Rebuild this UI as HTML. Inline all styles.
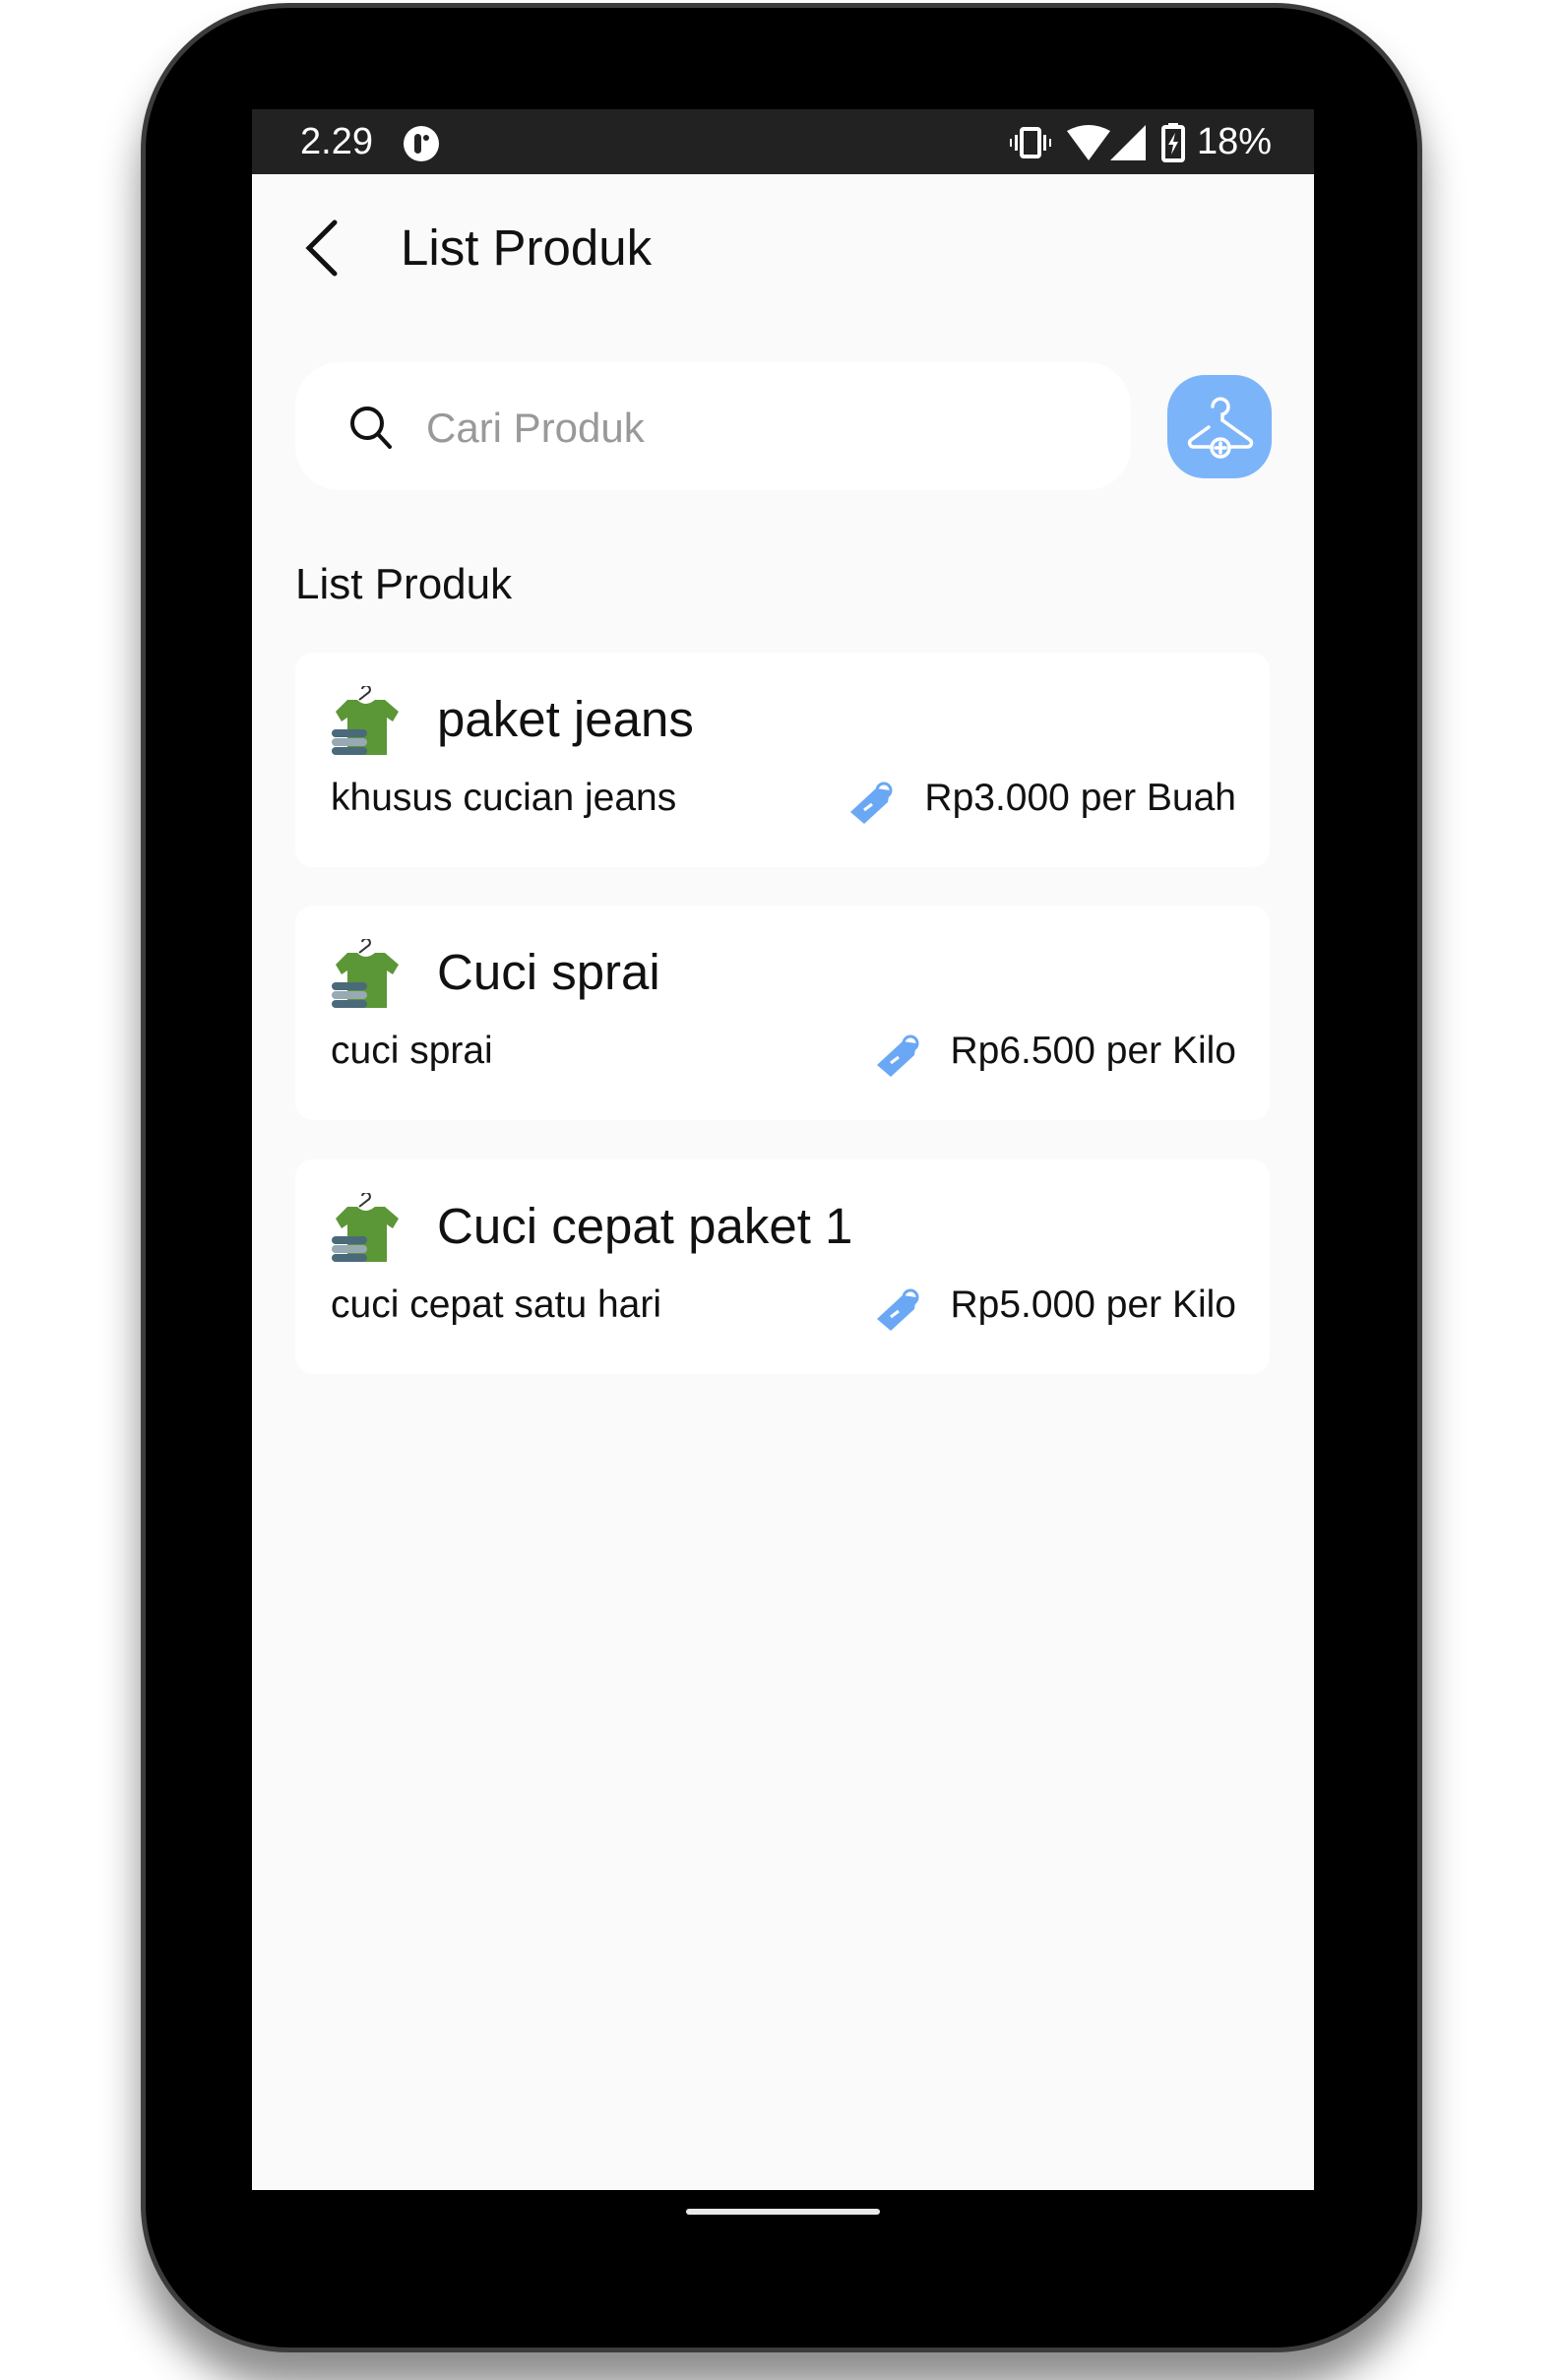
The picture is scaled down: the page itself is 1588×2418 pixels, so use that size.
<!DOCTYPE html>
<html><head><meta charset="utf-8"><style>
*{margin:0;padding:0;box-sizing:border-box}
body{width:1588px;height:2418px;background:#fff;position:relative;overflow:hidden;font-family:"Liberation Sans",sans-serif}
.phone{position:absolute;left:143px;top:3px;width:1302px;height:2387px;background:#000;border:5px solid #3c3c3c;border-radius:150px;box-shadow:0 35px 40px rgba(0,0,0,.45)}
.screen{position:absolute;left:256px;top:111px;width:1079px;height:2114px;background:#fafafa}
.status{position:absolute;left:0;top:0;width:100%;height:66px;background:#222;color:#fff}
.abs{position:absolute}
.card{position:absolute;left:44px;width:990px;height:218px;background:#fff;border-radius:18px}
.title{position:absolute;left:144px;top:38px;font-size:51px;color:#111}
.desc{position:absolute;left:36px;top:126px;font-size:39px;color:#111}
.price{position:absolute;right:34px;top:126px;font-size:39px;color:#111}
.shirt{position:absolute;left:35px;top:34px;width:72px;height:72px}
.tag{position:absolute;top:130px;width:48px;height:44px}
</style></head><body>
<div class="phone"></div>
<div class="screen">
 <div class="status">
  <div class="abs" style="left:49px;top:12px;font-size:38px">2.29</div>
  <svg class="abs" style="left:153px;top:16px" width="38" height="38" viewBox="0 0 38 38"><circle cx="19" cy="19" r="18" fill="#fff"/><rect x="12" y="9" width="7" height="20" rx="3.5" fill="#222"/><circle cx="24" cy="13" r="3" fill="#222"/></svg>
  <svg class="abs" style="left:770px;top:18px" width="44" height="32" viewBox="0 0 44 32"><rect x="12" y="2" width="18" height="28" rx="2" fill="none" stroke="#fff" stroke-width="4"/><rect x="5" y="8" width="3" height="16" fill="#fff"/><rect x="34" y="8" width="3" height="16" fill="#fff"/><rect x="0" y="12" width="2" height="8" fill="#fff"/><rect x="40" y="12" width="2" height="8" fill="#fff"/></svg>
  <svg class="abs" style="left:828px;top:16px" width="44" height="36" viewBox="0 0 44 36"><path d="M0 6Q22-6 44 6L22 36Z" fill="#fff"/></svg>
  <svg class="abs" style="left:872px;top:16px" width="36" height="36" viewBox="0 0 36 36"><path d="M36 0V36H0Z" fill="#fff"/></svg>
  <svg class="abs" style="left:924px;top:14px" width="24" height="40" viewBox="0 0 24 40"><rect x="2" y="4" width="20" height="34" rx="2" fill="none" stroke="#fff" stroke-width="4"/><rect x="7" y="0" width="10" height="4" fill="#fff"/><path d="M14 10L7 22H12L10 32L17 19H12Z" fill="#fff"/></svg>
  <div class="abs" style="left:960px;top:12px;font-size:38px">18%</div>
 </div>
 <svg class="abs" style="left:50px;top:112px" width="40" height="58" viewBox="0 0 40 58"><path d="M34 3L8 29L34 55" fill="none" stroke="#111" stroke-width="5" stroke-linecap="round"/></svg>
 <div class="abs" style="left:151px;top:111px;font-size:51px;color:#111">List Produk</div>
 <div class="abs" style="left:44px;top:257px;width:849px;height:130px;background:#fff;border-radius:45px"></div>
 <svg class="abs" style="left:98px;top:300px" width="46" height="46" viewBox="0 0 46 46"><circle cx="19" cy="19" r="15" fill="none" stroke="#111" stroke-width="4"/><path d="M30 30L42 43" stroke="#111" stroke-width="4" stroke-linecap="round"/></svg>
 <div class="abs" style="left:177px;top:300px;font-size:42px;color:#999">Cari Produk</div>
 <div class="abs" style="left:930px;top:270px;width:106px;height:105px;background:#7cb4fa;border-radius:38px"></div>
 <svg class="abs" style="left:948px;top:284px" width="72" height="76" viewBox="0 0 72 76"><g fill="none" stroke="#fff" stroke-width="3.5" stroke-linecap="round"><path d="M28 18a8 8 0 1 1 10 8v6"/><path d="M38 32L66 52a4 4 0 0 1-2 7H46"/><path d="M26 59H8a4 4 0 0 1-2-7L24 39"/><circle cx="36" cy="60" r="9"/><path d="M36 55v10M31 60h10"/></g></svg>
 <div class="abs" style="left:44px;top:458px;font-size:44px;color:#111">List Produk</div>

 <div class="card" style="top:552px">
  <svg class="shirt" viewBox="0 0 72 72"><path d="M18 14L6 26L12 36L18 32V70H58V32L64 36L70 26L56 14H46Q36 22 28 14Z" fill="#5b9637"/><path d="M33 3a4 4 0 1 1 6 4L30 14" fill="none" stroke="#333" stroke-width="2"/><rect x="2" y="44" width="36" height="8" rx="4" fill="#4a6a7a"/><rect x="2" y="53" width="36" height="8" rx="4" fill="#97aab3"/><rect x="2" y="62" width="36" height="8" rx="4" fill="#4a6a7a"/></svg>
  <div class="title">paket jeans</div>
  <div class="desc">khusus cucian jeans</div>
  <svg class="tag" style="left:560px" viewBox="0 0 48 44"><path d="M30 8L44 10L42 22L18 44L4 32Z" fill="#6aa8f5"/><circle cx="38" cy="10" r="7" fill="none" stroke="#6aa8f5" stroke-width="3"/><path d="M18 30l8-6" stroke="#fff" stroke-width="3"/></svg>
  <div class="price">Rp3.000 per Buah</div>
 </div>
 <div class="card" style="top:809px">
  <svg class="shirt" viewBox="0 0 72 72"><path d="M18 14L6 26L12 36L18 32V70H58V32L64 36L70 26L56 14H46Q36 22 28 14Z" fill="#5b9637"/><path d="M33 3a4 4 0 1 1 6 4L30 14" fill="none" stroke="#333" stroke-width="2"/><rect x="2" y="44" width="36" height="8" rx="4" fill="#4a6a7a"/><rect x="2" y="53" width="36" height="8" rx="4" fill="#97aab3"/><rect x="2" y="62" width="36" height="8" rx="4" fill="#4a6a7a"/></svg>
  <div class="title">Cuci sprai</div>
  <div class="desc">cuci sprai</div>
  <svg class="tag" style="left:587px" viewBox="0 0 48 44"><path d="M30 8L44 10L42 22L18 44L4 32Z" fill="#6aa8f5"/><circle cx="38" cy="10" r="7" fill="none" stroke="#6aa8f5" stroke-width="3"/><path d="M18 30l8-6" stroke="#fff" stroke-width="3"/></svg>
  <div class="price">Rp6.500 per Kilo</div>
 </div>
 <div class="card" style="top:1067px">
  <svg class="shirt" viewBox="0 0 72 72"><path d="M18 14L6 26L12 36L18 32V70H58V32L64 36L70 26L56 14H46Q36 22 28 14Z" fill="#5b9637"/><path d="M33 3a4 4 0 1 1 6 4L30 14" fill="none" stroke="#333" stroke-width="2"/><rect x="2" y="44" width="36" height="8" rx="4" fill="#4a6a7a"/><rect x="2" y="53" width="36" height="8" rx="4" fill="#97aab3"/><rect x="2" y="62" width="36" height="8" rx="4" fill="#4a6a7a"/></svg>
  <div class="title">Cuci cepat paket 1</div>
  <div class="desc">cuci cepat satu hari</div>
  <svg class="tag" style="left:587px" viewBox="0 0 48 44"><path d="M30 8L44 10L42 22L18 44L4 32Z" fill="#6aa8f5"/><circle cx="38" cy="10" r="7" fill="none" stroke="#6aa8f5" stroke-width="3"/><path d="M18 30l8-6" stroke="#fff" stroke-width="3"/></svg>
  <div class="price">Rp5.000 per Kilo</div>
 </div>
</div>
<div class="abs" style="left:697px;top:2244px;width:197px;height:6px;background:#e8e8e8;border-radius:3px"></div>
</body></html>
